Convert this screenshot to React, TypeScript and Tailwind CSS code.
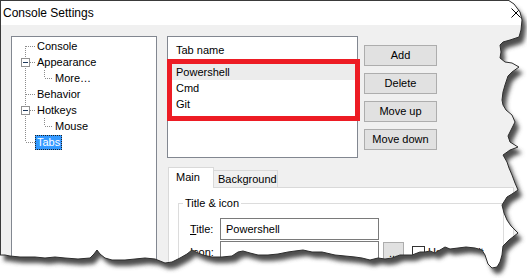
import React from 'react';

// torn right + bottom edge of the screenshot, clockwise from the top border
const TORN: [number, number][] = [
  [508, 0], [514, 4], [520, 12], [522, 20], [521, 30], [519, 37], [510, 40], [503, 42], [500, 45],
  [501, 52], [500, 58], [505, 62], [512, 63], [519, 67], [512, 72], [508, 76], [505, 85], [503, 92],
  [502, 100], [503, 105], [506, 110], [512, 115], [515, 122], [511, 130], [508, 136], [510, 142],
  [518, 147], [510, 150], [503, 155], [507, 162], [509, 168], [512, 175], [515, 183], [518, 190],
  [512, 194], [507, 197], [502, 205], [504, 213], [507, 220], [511, 226], [518, 233], [509, 240],
  [503, 246], [502, 255], [500, 262], [497, 267], [492, 268], [488, 264], [485, 255], [482, 250],
  [475, 248], [466, 247], [458, 248], [450, 249], [445, 247], [440, 250], [435, 253], [430, 251],
  [425, 252], [420, 252], [412, 255], [405, 255], [400, 255], [392, 258], [385, 259], [378, 258],
  [370, 260], [362, 258], [355, 257], [345, 256], [335, 255], [322, 252], [312, 252], [303, 250],
  [295, 251], [288, 252], [278, 254], [268, 255], [258, 255], [250, 253], [243, 251], [238, 252],
  [232, 256], [222, 257], [212, 257], [203, 255], [196, 252], [192, 250], [187, 254], [180, 258],
  [172, 262], [165, 263], [155, 259], [145, 258], [135, 259], [125, 260], [112, 260], [105, 258],
  [100, 254], [97, 250], [94, 254], [90, 258], [78, 259], [65, 258], [55, 257], [45, 258],
  [35, 257], [20, 257], [10, 256], [5, 255], [0, 255],
];

const edge = TORN.map(([x, y], i) => `${i === 0 ? 'M' : 'L'}${x} ${y}`).join(' ');
const shape = `M0 0 ${edge.replace(/^M/, 'L')} Z`;

const DOT = { stroke: '#8c8c8c', strokeDasharray: '1 1', strokeWidth: 1 };

type TreeRow = {
  label: string;
  level: 0 | 1;
  line?: 'first' | 'mid' | 'last';
  expander?: boolean;
  selected?: boolean;
};

const rows: TreeRow[] = [
  { label: 'Console', level: 0, line: 'first' },
  { label: 'Appearance', level: 0, line: 'mid', expander: true },
  { label: 'More…', level: 1 },
  { label: 'Behavior', level: 0, line: 'mid' },
  { label: 'Hotkeys', level: 0, line: 'mid', expander: true },
  { label: 'Mouse', level: 1 },
  { label: 'Tabs', level: 0, line: 'last', selected: true },
];

const Gutter: React.FC<{ row: TreeRow }> = ({ row }) => {
  if (row.level === 1) {
    return (
      <svg width={41} height={16} className="shrink-0">
        <line x1={13.5} y1={0} x2={13.5} y2={16} {...DOT} />
        <line x1={32.5} y1={0} x2={32.5} y2={8} {...DOT} />
        <line x1={33} y1={8.5} x2={41} y2={8.5} {...DOT} />
      </svg>
    );
  }
  const y1 = row.line === 'first' ? 8 : 0;
  const y2 = row.line === 'last' ? 8 : 16;
  return (
    <svg width={23} height={16} className="shrink-0">
      <line x1={13.5} y1={y1} x2={13.5} y2={y2} {...DOT} />
      <line x1={row.expander ? 18 : 14} y1={8.5} x2={23} y2={8.5} {...DOT} />
      {row.expander && (
        <>
          <rect x={9.5} y={4.5} width={8} height={8} fill="#fff" stroke="#919191" />
          <line x1={11} y1={8.5} x2={16} y2={8.5} stroke="#1e395b" />
        </>
      )}
    </svg>
  );
};

const Button: React.FC<{ children: React.ReactNode }> = ({ children }) => (
  <button className="w-[73px] h-[21px] bg-[#e1e1e1] border border-[#adadad] text-[11px] leading-[13px] text-black">
    {children}
  </button>
);

export default function App() {
  return (
    <div className="relative w-[527px] h-[278px] overflow-hidden bg-white font-['Liberation_Sans',Arial,sans-serif] text-black">
      {/* Dialog */}
      <div className="w-[530px] h-[276px] border-l border-t border-[#3a3a3a] bg-[#f0f0f0] flex flex-col">
        {/* Title bar */}
        <div className="h-[24px] bg-white flex items-center justify-between pl-[2px] pr-[9px] shrink-0">
          <span className="text-[12px] leading-[14px]">Console Settings</span>
          <svg width={10} height={10} viewBox="0 0 10 10">
            <path d="M0.5 0.5 L9.5 9.5 M9.5 0.5 L0.5 9.5" stroke="#000" strokeWidth={1} />
          </svg>
        </div>

        {/* Body */}
        <div className="flex pl-[10px] pt-[11px] gap-[10px]">
          {/* Tree */}
          <div className="w-[146px] h-[236px] bg-white border border-[#828790] pt-[1px] shrink-0">
            {rows.map((row) => (
              <div key={row.label} className="flex items-center h-[16px]">
                <Gutter row={row} />
                <span
                  className={
                    row.selected
                      ? 'h-[15px] px-[1px] border border-dotted border-[#222] bg-[#3399ff] text-white text-[11px] leading-[13px]'
                      : 'h-[15px] px-[1px] border border-transparent text-[11px] leading-[13px]'
                  }
                >
                  {row.label}
                </span>
              </div>
            ))}
          </div>

          {/* Right column */}
          <div className="flex flex-col">
            <div className="flex">
              {/* Tab list */}
              <div className="relative w-[191px] h-[122px] bg-white border border-[#828790] shrink-0">
                <div className="h-[27px] flex items-center pl-[8px] text-[11px] leading-[13px]">Tab name</div>
                <div className="h-[16px] flex items-center pl-[8px] bg-[#ececec] text-[11px] leading-[13px]">Powershell</div>
                <div className="h-[16px] flex items-center pl-[8px] text-[11px] leading-[13px]">Cmd</div>
                <div className="h-[16px] flex items-center pl-[8px] text-[11px] leading-[13px]">Git</div>
                {/* red annotation */}
                <div className="absolute -left-[1px] top-[22px] w-[193px] h-[62px] border-[5px] border-[#ed1c24]" />
              </div>

              {/* Buttons */}
              <div className="flex flex-col gap-[7px] ml-[6px] pt-[9px]">
                <Button>Add</Button>
                <Button>Delete</Button>
                <Button>Move up</Button>
                <Button>Move down</Button>
              </div>
            </div>

            {/* Tab control */}
            <div className="ml-[1px] mt-[9px] flex flex-col">
              <div className="h-[21px] flex items-end">
                <div className="relative z-10 w-[46px] h-[21px] bg-white border-l border-t border-r border-[#d9d9d9] pl-[7px] pt-[3px] text-[11px] leading-[13px]">
                  Main
                </div>
                <div className="w-[64px] h-[18px] bg-[#f0f0f0] border-t border-r border-[#d9d9d9] pl-[4px] pt-[2px] text-[11px] leading-[13px]">
                  Background
                </div>
              </div>
              <div className="-mt-[1px] w-[346px] h-[100px] bg-white border border-[#d9d9d9] pl-[9px] pt-[15px]">
                {/* Group box */}
                <div className="relative w-[326px] h-[80px] border border-[#dcdcdc] pl-[11px] pt-[14px]">
                  <span className="absolute left-[4px] -top-[7px] bg-white px-[2px] text-[11px] leading-[13px]">
                    Title &amp; icon
                  </span>
                  <div className="flex items-center h-[22px]">
                    <span className="w-[30px] text-[11px] leading-[13px]">
                      <span className="underline">T</span>itle:
                    </span>
                    <div className="w-[159px] h-[22px] border border-[#7a7a7a] bg-white flex items-center pl-[5px] text-[11px] leading-[13px]">
                      Powershell
                    </div>
                  </div>
                  <div className="flex items-start mt-[1px]">
                    <span className="w-[30px] pt-[5px] text-[11px] leading-[13px]">
                      <span className="underline">I</span>con:
                    </span>
                    <div className="w-[159px] h-[22px] border border-[#7a7a7a] bg-white" />
                    <div className="ml-[4px] mt-[1px] w-[21px] h-[22px] bg-[#e1e1e1] border border-[#adadad] flex items-end justify-center pb-[3px] text-[11px] leading-[13px]">
                      ...
                    </div>
                    <div className="ml-[8px] mt-[5px] w-[13px] h-[13px] border border-[#333] bg-white" />
                    <span className="ml-[3px] mt-[5px] text-[11px] leading-[13px]">Use default</span>
                  </div>
                </div>
              </div>
            </div>
          </div>
        </div>
      </div>

      {/* Torn paper edge with drop shadow */}
      <svg className="absolute inset-0 pointer-events-none" width={527} height={278}>
        <defs>
          <filter id="torn-blur" x="-10%" y="-10%" width="120%" height="120%">
            <feGaussianBlur stdDeviation={2} />
          </filter>
          <clipPath id="outside">
            <path clipRule="evenodd" d={`M-20 -20 H560 V300 H-20 Z ${shape}`} />
          </clipPath>
        </defs>
        <g clipPath="url(#outside)">
          <rect x={-20} y={-20} width={570} height={320} fill="#fff" />
          <path d={shape} transform="translate(4 6)" fill="#4d4d4d" filter="url(#torn-blur)" />
        </g>
        <path d={edge} fill="none" stroke="#2e2e2e" strokeWidth={1} />
      </svg>
    </div>
  );
}
